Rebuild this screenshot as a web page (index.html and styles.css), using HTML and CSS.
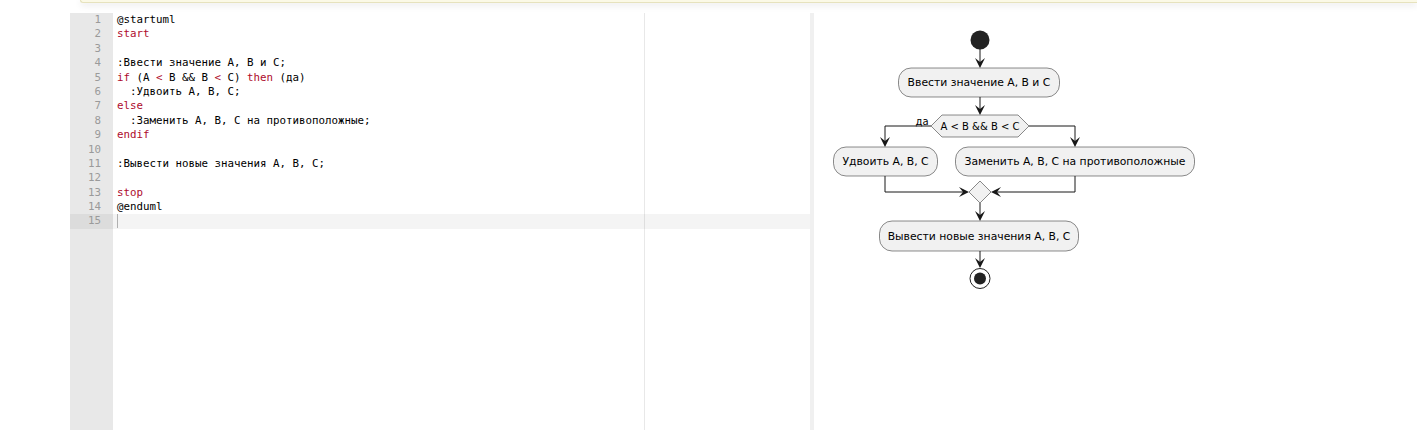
FILE: index.html
```html
<!DOCTYPE html>
<html lang="ru">
<head>
<meta charset="utf-8">
<title>PlantUML editor</title>
<link rel="stylesheet" href="styles.css">
</head>
<body>
<div class="notice"></div>
<div class="workspace">
  <div class="editor">
    <div class="gutter">
      <div class="num">1</div><div class="num">2</div><div class="num">3</div><div class="num">4</div><div class="num">5</div>
      <div class="num">6</div><div class="num">7</div><div class="num">8</div><div class="num">9</div><div class="num">10</div>
      <div class="num">11</div><div class="num">12</div><div class="num">13</div><div class="num">14</div><div class="num active">15</div>
    </div>
    <div class="code">
      <div class="print-margin"></div>
      <div class="line">@startuml</div>
      <div class="line"><span class="kw">start</span></div>
      <div class="line"></div>
      <div class="line">:Ввести значение А, В и С;</div>
      <div class="line"><span class="kw">if</span> (A <span class="kw">&lt;</span> B &amp;&amp; B <span class="kw">&lt;</span> C) <span class="kw">then</span> (да)</div>
      <div class="line">  :Удвоить А, В, С;</div>
      <div class="line"><span class="kw">else</span></div>
      <div class="line">  :Заменить А, В, С на противоположные;</div>
      <div class="line"><span class="kw">endif</span></div>
      <div class="line"></div>
      <div class="line">:Вывести новые значения А, В, С;</div>
      <div class="line"></div>
      <div class="line"><span class="kw">stop</span></div>
      <div class="line">@enduml</div>
      <div class="line active"><span class="cursor"></span></div>
    </div>
  </div>
  <div class="splitter"></div>
  <div class="preview">
    <svg class="diagram" width="603" height="417" viewBox="814 13 603 417" xmlns="http://www.w3.org/2000/svg">
      <g class="edges" fill="none" stroke="#181818" stroke-width="1">
        <line x1="980" y1="49" x2="980" y2="66"/>
        <line x1="980" y1="97" x2="980" y2="113"/>
        <polyline points="931,126 885,126 885,145"/>
        <polyline points="1029,126 1075,126 1075,145"/>
        <polyline points="885,176 885,192 967,192"/>
        <polyline points="1075,176 1075,192 993,192"/>
        <line x1="980" y1="203" x2="980" y2="219"/>
        <line x1="980" y1="251" x2="980" y2="266"/>
      </g>
      <g class="heads" fill="#181818">
        <polygon points="975,58 980,68 985,58 980,62"/>
        <polygon points="975,105 980,115 985,105 980,109"/>
        <polygon points="880,137 885,147 890,137 885,141"/>
        <polygon points="1070,137 1075,147 1080,137 1075,141"/>
        <polygon points="959,187 969,192 959,197 963,192"/>
        <polygon points="1001,187 991,192 1001,197 997,192"/>
        <polygon points="975,211 980,221 985,211 980,215"/>
        <polygon points="975,258 980,268 985,258 980,262"/>
      </g>
      <circle cx="980" cy="40" r="9.5" fill="#222222"/>
      <g class="nodes" fill="#f1f1f1" stroke="#181818" stroke-width="0.5">
        <rect x="898.5" y="68" width="161" height="29" rx="12.5" ry="12.5"/>
        <polygon points="931,126 942,115 1018,115 1029,126 1018,137 942,137"/>
        <rect x="833.5" y="147" width="104" height="29" rx="12.5" ry="12.5"/>
        <rect x="955.5" y="147" width="239" height="29" rx="12.5" ry="12.5"/>
        <polygon points="980,181 991,192 980,203 969,192"/>
        <rect x="879.5" y="221" width="199" height="30" rx="12.5" ry="12.5"/>
      </g>
      <circle cx="980" cy="278.5" r="10" fill="#ffffff" stroke="#222222" stroke-width="1"/>
      <circle cx="980" cy="278.5" r="6" fill="#222222"/>
      <g class="labels" fill="#000000" text-anchor="middle">
        <text x="979" y="86">Ввести значение А, В и С</text>
        <text class="small" x="980" y="130">A &lt; B &amp;&amp; B &lt; C</text>
        <text class="small" x="922" y="125">да</text>
        <text x="885.5" y="165">Удвоить А, В, С</text>
        <text x="1075" y="165">Заменить А, В, С на противоположные</text>
        <text x="979" y="240">Вывести новые значения А, В, С</text>
      </g>
    </svg>
  </div>
</div>
</body>
</html>
```
FILE: styles.css
```css
html, body {
  margin: 0;
  padding: 0;
  background: #ffffff;
  overflow: hidden;
}
body {
  width: 1417px;
  height: 430px;
  font-family: "DejaVu Sans", sans-serif;
}
.notice {
  height: 2px;
  margin-left: 80px;
  background: #fbf9e6;
  border: 1px solid #e6e2bd;
  border-top: none;
  border-right: none;
  border-radius: 0 0 0 6px;
  box-shadow: 0 2px 7px rgba(0, 0, 0, 0.13);
}
.workspace {
  display: flex;
  margin-top: 10px;
  height: 417px;
}
.editor {
  width: 740px;
  margin-left: 70px;
  display: flex;
  font-family: "DejaVu Sans Mono", monospace;
  font-size: 10.8px;
  line-height: 14.4px;
  background: #ffffff;
}
.gutter {
  width: 43px;
  flex: none;
  background: #e8e8e8;
  color: #9a9a9a;
  text-align: right;
}
.num {
  height: 14.4px;
  padding-right: 12px;
}
.num.active {
  background: #dcdcdc;
}
.code {
  flex: 1;
  position: relative;
  color: #000000;
}
.print-margin {
  position: absolute;
  left: 531px;
  top: 0;
  bottom: 0;
  width: 1px;
  background: #e8e8e8;
}
.line {
  position: relative;
  height: 14.4px;
  padding-left: 4px;
  white-space: pre;
}
.line.active {
  background: rgba(0, 0, 0, 0.045);
}
.kw {
  color: #ae0b2d;
}
.cursor {
  display: inline-block;
  width: 1px;
  height: 14px;
  vertical-align: top;
  background: #b0b0b0;
}
.splitter {
  width: 4px;
  flex: none;
  background: #f0f0f0;
}
.preview {
  flex: 1;
  background: #ffffff;
}
.diagram {
  display: block;
}
.labels {
  font-family: "DejaVu Sans", sans-serif;
  font-size: 10.8px;
}
.labels .small {
  font-size: 10px;
}
```
